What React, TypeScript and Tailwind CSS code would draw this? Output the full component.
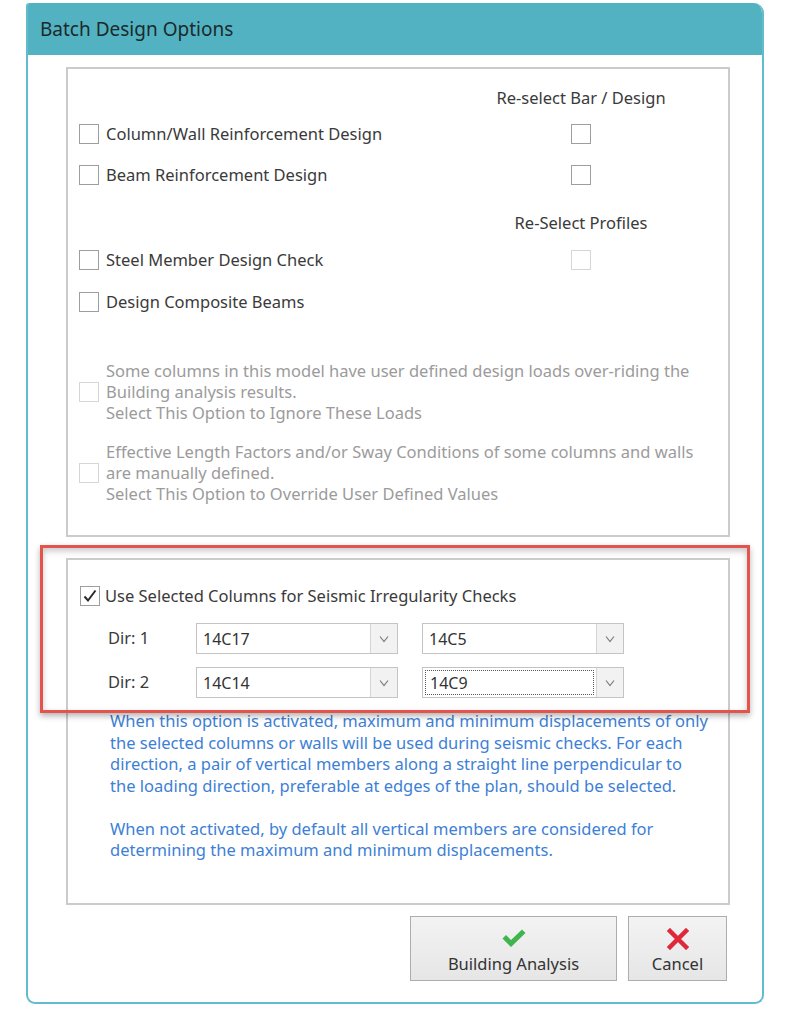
import React from "react";

const font = { fontFamily: '"Noto Sans", "Liberation Sans", sans-serif' };

function Box({ disabled = false, checked = false }: { disabled?: boolean; checked?: boolean }) {
  return (
    <div
      className={`w-[20px] h-[20px] shrink-0 border bg-white flex items-center justify-center ${
        disabled ? "border-[#d6d6d6]" : "border-[#9e9e9e]"
      }`}
    >
      {checked && (
        <svg width="16" height="16" viewBox="0 0 16 16">
          <path d="M2.5 8.5 L6 12.5 L13.5 2.5" fill="none" stroke="#2b2b2b" strokeWidth="2" />
        </svg>
      )}
    </div>
  );
}

function Combo({ value, focused = false }: { value: string; focused?: boolean }) {
  return (
    <div className="w-[202px] h-[31px] border border-[#c4c4c4] bg-white flex">
      <div className="flex-1 p-[2px]">
        <div
          className={`h-full flex items-center pl-[4px] text-[16px] text-[#333] ${
            focused ? "border border-dotted border-[#555]" : ""
          }`}
        >
          {value}
        </div>
      </div>
      <div className="w-[27px] bg-[#f2f2f2] border-l border-[#d4d4d4] flex items-center justify-center">
        <svg width="10" height="8" viewBox="0 0 10 8">
          <path d="M1 1.5 L5 6.5 L9 1.5" fill="none" stroke="#7a7a7a" strokeWidth="1.2" />
        </svg>
      </div>
    </div>
  );
}

export default function App() {
  return (
    <div className="relative w-[795px] h-[1024px] bg-white" style={font}>
      <div className="pt-[3px] pl-[26px]">
        {/* dialog window */}
        <div className="w-[738px] h-[1001px] flex flex-col border-x-2 border-b-2 border-[#62bccb] rounded-tl-[3px] rounded-tr-[10px] rounded-b-[9px] overflow-hidden bg-white">
          <div className="h-[52px] shrink-0 bg-[#53b2c1] flex items-center pl-[12px] text-[19px] text-[#1b2a2c]">
            Batch Design Options
          </div>

          <div className="flex-1 flex flex-col pl-[38px] pt-[12px]">
            {/* first group */}
            <div className="w-[664px] h-[470px] border-2 border-[#cbcbcb] flex flex-col text-[16.5px] text-[#3a3a3a]">
              <div className="mt-[17px] h-[24px] grid grid-cols-[413px_200px] items-center">
                <div />
                <div className="text-center">Re-select Bar / Design</div>
              </div>
              <div className="mt-[9px] h-[30px] grid grid-cols-[413px_200px] items-center">
                <div className="flex items-center gap-[7px] pl-[11px]">
                  <Box />
                  <span>Column/Wall Reinforcement Design</span>
                </div>
                <div className="flex justify-center">
                  <Box />
                </div>
              </div>
              <div className="mt-[11px] h-[30px] grid grid-cols-[413px_200px] items-center">
                <div className="flex items-center gap-[7px] pl-[11px]">
                  <Box />
                  <span>Beam Reinforcement Design</span>
                </div>
                <div className="flex justify-center">
                  <Box />
                </div>
              </div>
              <div className="mt-[21px] h-[24px] grid grid-cols-[413px_200px] items-center">
                <div />
                <div className="text-center">Re-Select Profiles</div>
              </div>
              <div className="mt-[10px] h-[30px] grid grid-cols-[413px_200px] items-center">
                <div className="flex items-center gap-[7px] pl-[11px]">
                  <Box />
                  <span>Steel Member Design Check</span>
                </div>
                <div className="flex justify-center">
                  <Box disabled />
                </div>
              </div>
              <div className="mt-[12px] h-[30px] flex items-center gap-[7px] pl-[11px]">
                <Box />
                <span>Design Composite Beams</span>
              </div>

              <div className="mt-[43px] flex items-center gap-[7px] pl-[11px] text-[#9b9b9b] text-[16.5px] leading-[21px]">
                <Box disabled />
                <div>
                  Some columns in this model have user defined design loads over-riding the
                  <br />
                  Building analysis results.
                  <br />
                  Select This Option to Ignore These Loads
                </div>
              </div>
              <div className="mt-[18px] flex items-center gap-[7px] pl-[11px] text-[#9b9b9b] text-[16.5px] leading-[21px]">
                <Box disabled />
                <div>
                  Effective Length Factors and/or Sway Conditions of some columns and walls
                  <br />
                  are manually defined.
                  <br />
                  Select This Option to Override User Defined Values
                </div>
              </div>
            </div>

            {/* second group */}
            <div className="mt-[21px] w-[664px] h-[347px] border-2 border-[#cbcbcb] flex flex-col text-[16.5px] text-[#3a3a3a]">
              <div className="mt-[21px] h-[30px] flex items-center gap-[5px] pl-[12px]">
                <Box checked />
                <span>Use Selected Columns for Seismic Irregularity Checks</span>
              </div>
              <div className="mt-[12px] flex items-center pl-[40px]">
                <span className="w-[88px]">Dir: 1</span>
                <div className="flex gap-[24px]">
                  <Combo value="14C17" />
                  <Combo value="14C5" />
                </div>
              </div>
              <div className="mt-[13px] flex items-center pl-[40px]">
                <span className="w-[88px]">Dir: 2</span>
                <div className="flex gap-[24px]">
                  <Combo value="14C14" />
                  <Combo value="14C9" focused />
                </div>
              </div>
              <div className="mt-[12px] pl-[42px] text-[16.5px] leading-[21.5px] text-[#3d7fd6] whitespace-nowrap">
                <p>
                  When this option is activated, maximum and minimum displacements of only
                  <br />
                  the selected columns or walls will be used during seismic checks. For each
                  <br />
                  direction, a pair of vertical members along a straight line perpendicular to
                  <br />
                  the loading direction, preferable at edges of the plan, should be selected.
                </p>
                <p className="mt-[21.5px]">
                  When not activated, by default all vertical members are considered for
                  <br />
                  determining the maximum and minimum displacements.
                </p>
              </div>
            </div>

            {/* buttons */}
            <div className="mt-[11px] w-[661px] flex justify-end gap-[11px]">
              <button className="w-[207px] h-[65px] border border-[#adadad] bg-gradient-to-b from-[#f3f3f3] to-[#e6e6e6] flex flex-col items-center justify-center pt-[8px] text-[16.5px] text-[#333]">
                <svg width="26" height="20" viewBox="0 0 26 20">
                  <path d="M1.5 10.5 L5 7 L10 12 L21 1.5 L24.5 5 L10 19 Z" fill="#3fb54e" />
                </svg>
                <span className="mt-[4px]">Building Analysis</span>
              </button>
              <button className="w-[99px] h-[65px] border border-[#adadad] bg-gradient-to-b from-[#f3f3f3] to-[#e6e6e6] flex flex-col items-center justify-center pt-[8px] text-[16.5px] text-[#333]">
                <svg width="22" height="22" viewBox="0 0 22 22">
                  <path d="M3 3 L19 19 M19 3 L3 19" stroke="#e0283a" strokeWidth="4.5" strokeLinecap="square" />
                </svg>
                <span className="mt-[2px]">Cancel</span>
              </button>
            </div>
          </div>
        </div>
      </div>

      {/* red annotation frame */}
      <div className="absolute left-[40px] top-[545px] w-[710px] h-[168px] border-[3px] border-[#e5534d] shadow-[0_3px_6px_rgba(0,0,0,0.3),inset_0_3px_6px_rgba(0,0,0,0.22)] pointer-events-none" />
    </div>
  );
}
